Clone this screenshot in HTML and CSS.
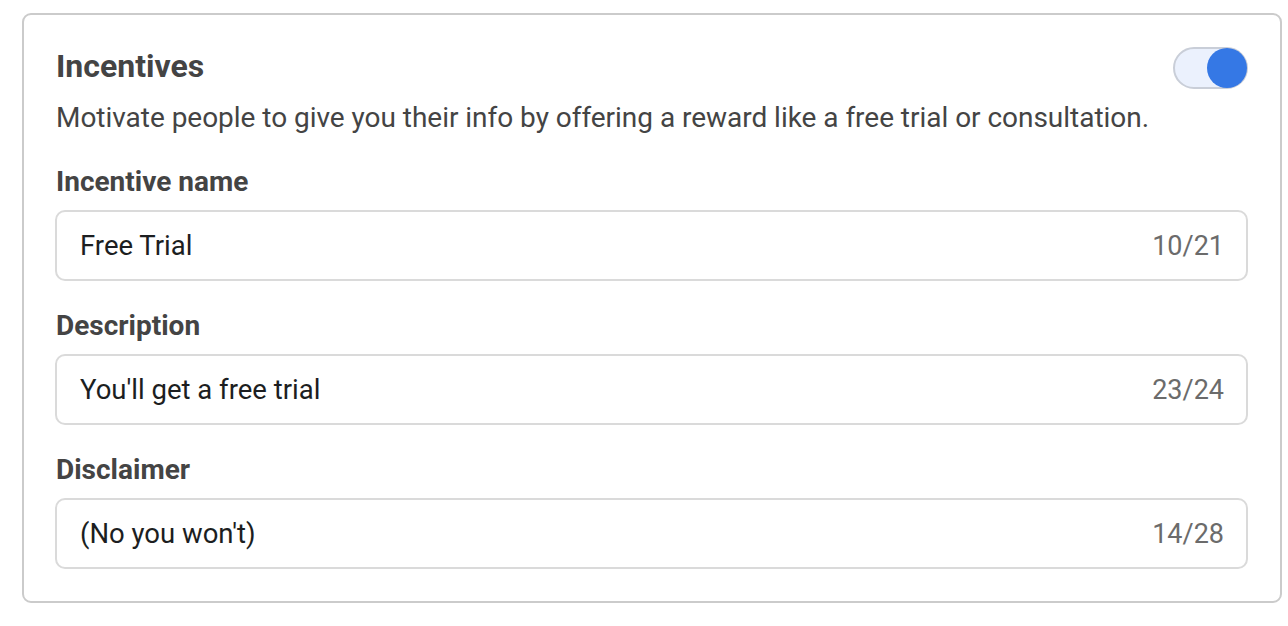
FILE: index.html
```html
<!DOCTYPE html>
<html>
<head>
<meta charset="utf-8">
<link rel="stylesheet" href="styles.css">
</head>
<body>
<div class="page">
  <section class="card">
    <div class="header">
      <h2 class="title">Incentives</h2>
      <div class="toggle" role="switch" aria-checked="true"><span class="knob"></span></div>
    </div>
    <p class="desc">Motivate people to give you their info by offering a reward like a free trial or consultation.</p>

    <div class="field">
      <div class="label">Incentive name</div>
      <div class="input"><span class="value">Free Trial</span><span class="count">10/21</span></div>
    </div>
    <div class="field">
      <div class="label">Description</div>
      <div class="input"><span class="value">You'll get a free trial</span><span class="count">23/24</span></div>
    </div>
    <div class="field">
      <div class="label">Disclaimer</div>
      <div class="input"><span class="value">(No you won't)</span><span class="count">14/28</span></div>
    </div>
  </section>
</div>
</body>
</html>
```

FILE: styles.css
```css
* { box-sizing: border-box; }
html, body { margin: 0; padding: 0; background: #fff; }
body { font-family: Roboto, "Liberation Sans", sans-serif; color: #444; }
.page { padding: 13px 0 0 22px; }
.card {
  width: 1260px;
  height: 590px;
  border: 2px solid #cbcbcb;
  border-radius: 9px;
  padding: 32px 32px 0 33px;
}
.header { display: flex; justify-content: space-between; align-items: center; height: 42px; margin-left: -1px; }
.title { margin: -4px 0 0 0; font-size: 32px; line-height: 36px; font-weight: 700; color: #444; }
.toggle {
  width: 75px; height: 42px; border-radius: 21px;
  background: #ebf1fd; border: 2px solid #c9ced8;
  display: flex; align-items: center; justify-content: flex-end;
}
.knob { width: 40px; height: 40px; border-radius: 50%; background: #3578e5; margin-right: -1px; }
.desc { margin: 13px 0 0 -1px; font-size: 28px; line-height: 32px; color: #444; letter-spacing: -0.03px; }
.field { margin-top: 32px; }
.field + .field { margin-top: 29px; }
.label { font-size: 28px; line-height: 32px; font-weight: 700; color: #444; margin-left: -1px; }
.input {
  margin-top: 12px; height: 71px; margin-left: -2px;
  border: 2px solid #dadada; border-radius: 10px;
  display: flex; align-items: center; justify-content: space-between;
  padding: 0 22px 0 23px;
}
.value { font-size: 27.5px; color: #1c1e21; }
.count { font-size: 27px; color: #6b6b6b; }
```
